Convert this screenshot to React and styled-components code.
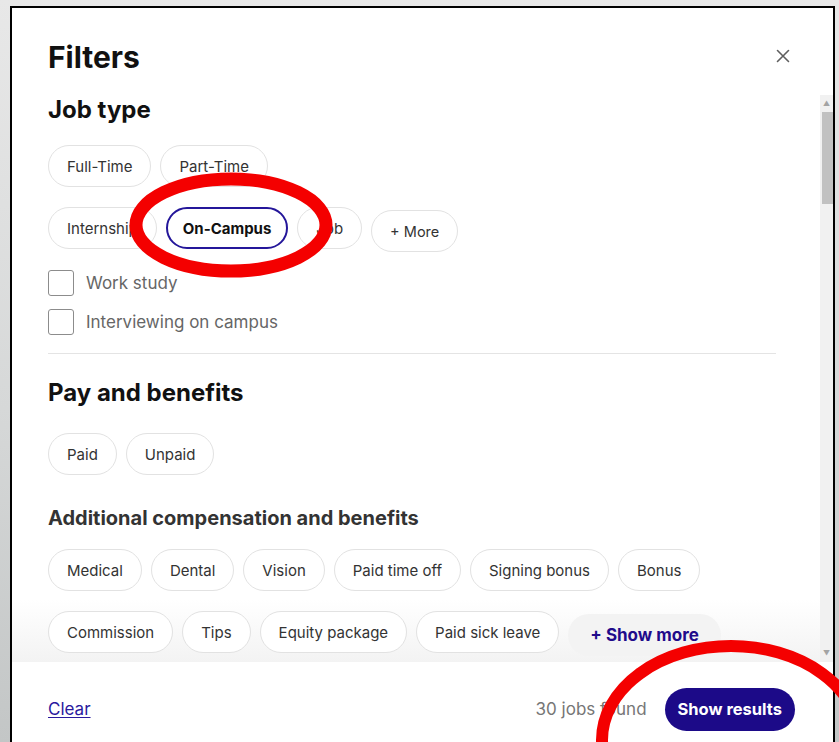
import React from "react";
import styled, { createGlobalStyle } from "styled-components";

const GlobalStyle = createGlobalStyle`
  html, body {
    margin: 0;
    padding: 0;
    height: 100%;
  }
  body {
    background: linear-gradient(180deg, #e8e8e8 0%, #d6d8d8 55%, #c3c6c6 100%);
    font-family: Inter, "Noto Sans", Arial, sans-serif;
    -webkit-font-smoothing: antialiased;
    overflow: hidden;
  }
  * { box-sizing: border-box; }
`;

const Page = styled.div`
  height: 100vh;
  padding: 6px 4px 0 10px;
  display: flex;
`;

const Modal = styled.section`
  flex: 1;
  display: flex;
  flex-direction: column;
  background: #fff;
  border: 2px solid #000;
  border-bottom: none;
  min-height: 0;
`;

const Header = styled.header`
  height: 87px;
  flex: none;
  display: flex;
  align-items: flex-start;
  justify-content: space-between;
  padding: 31px 43px 0 36px;
`;

const Title = styled.h1`
  margin: 0;
  font-size: 30px;
  line-height: 36px;
  font-weight: 700;
  color: #111;
`;

const CloseButton = styled.button`
  border: none;
  background: none;
  padding: 0;
  margin-top: 10px;
  width: 14px;
  height: 14px;
  display: flex;
  color: #5f5f5f;
  cursor: pointer;
`;

const ScrollArea = styled.div`
  flex: 1;
  display: flex;
  min-height: 0;
`;

const Content = styled.div`
  flex: 1;
  overflow: hidden;
  padding: 1px 44px 0 36px;
  background: linear-gradient(180deg, #fff 0, #fff calc(100% - 62px), #f3f3f3 100%);
`;

const Scrollbar = styled.div`
  width: 13px;
  flex: none;
  background: #f1f1f1;
  display: flex;
  flex-direction: column;
  align-items: stretch;
`;

const ScrollArrow = styled.div`
  height: 17px;
  display: flex;
  align-items: center;
  justify-content: center;
  color: #a3a3a3;
  font-size: 7px;
  line-height: 1;
`;

const ScrollThumb = styled.div`
  height: 92px;
  margin: 0 0 0 2px;
  background: #c1c1c1;
`;

const ScrollSpacer = styled.div`
  flex: 1;
`;

const SectionTitle = styled.h2`
  margin: ${(p) => p.$mt || 0}px 0 0;
  font-size: 24px;
  line-height: 28px;
  font-weight: 700;
  color: #111;
`;

const SubTitle = styled.h3`
  margin: ${(p) => p.$mt || 0}px 0 0;
  font-size: 20px;
  line-height: 24px;
  font-weight: 700;
  color: #333;
`;

const ChipGroup = styled.div`
  display: flex;
  flex-wrap: wrap;
  align-items: flex-start;
  column-gap: 9px;
  row-gap: 20px;
  margin-top: ${(p) => p.$mt || 0}px;
`;

const Chip = styled.button`
  height: 42px;
  padding: 0 ${(p) => (p.$selected ? 15 : 18)}px;
  border-radius: 21px;
  border: ${(p) => (p.$selected ? "2px solid #24169a" : "1px solid #e2e2e2")};
  background: #fff;
  font-family: inherit;
  font-size: 15px;
  font-weight: ${(p) => (p.$selected ? 700 : 400)};
  color: ${(p) => (p.$selected ? "#111" : "#333")};
  white-space: nowrap;
  cursor: pointer;
`;

const MoreChip = styled(Chip)`
  margin-top: 3px;
  font-size: 14.5px;
`;

const ShowMoreChip = styled.button`
  height: 42px;
  margin-top: 3px;
  padding: 0 22px;
  border: none;
  border-radius: 21px;
  background: #f3f3f3;
  font-family: inherit;
  font-size: 17px;
  font-weight: 700;
  color: #1f0b8b;
  white-space: nowrap;
  cursor: pointer;
`;

const CheckList = styled.div`
  display: flex;
  flex-direction: column;
  gap: 13px;
  margin-top: 18px;
`;

const CheckRow = styled.label`
  display: flex;
  align-items: center;
  gap: 12px;
  font-size: 17px;
  color: #666;
  cursor: pointer;
`;

const Box = styled.span`
  width: 26px;
  height: 26px;
  border: 1.5px solid #8c8c8c;
  border-radius: 3px;
  background: #fff;
  flex: none;
`;

const Divider = styled.hr`
  border: none;
  border-top: 1px solid #e4e4e4;
  margin: 18px 0 0;
`;

const Footer = styled.footer`
  height: 80px;
  flex: none;
  display: flex;
  align-items: center;
  padding: 14px 38px 0 36px;
  gap: 18px;
  background: #fff;
`;

const ClearLink = styled.a`
  font-size: 17px;
  color: #2a1a9e;
  text-decoration: underline;
  text-underline-offset: 2px;
  margin-right: auto;
  cursor: pointer;
`;

const Count = styled.span`
  font-size: 17px;
  color: #767676;
`;

const PrimaryButton = styled.button`
  height: 43px;
  padding: 0 13px;
  border: none;
  border-radius: 22px;
  background: #1c0a88;
  color: #fff;
  font-family: inherit;
  font-size: 16.5px;
  font-weight: 700;
  cursor: pointer;
`;

const Annotations = styled.svg`
  position: fixed;
  inset: 0;
  width: 100vw;
  height: 100vh;
  pointer-events: none;
`;

const CloseIcon = () => (
  <svg width="14" height="14" viewBox="0 0 14 14" fill="none">
    <path d="M1.5 1.5l11 11M12.5 1.5l-11 11" stroke="currentColor" strokeWidth="1.6" strokeLinecap="round" />
  </svg>
);

const employment = ["Full-Time", "Part-Time"];
const roleKinds = ["Internship", "On-Campus", "Job"];
const benefits = [
  "Medical",
  "Dental",
  "Vision",
  "Paid time off",
  "Signing bonus",
  "Bonus",
  "Commission",
  "Tips",
  "Equity package",
  "Paid sick leave",
];

export default function App() {
  return (
    <>
      <GlobalStyle />
      <Page>
        <Modal>
          <Header>
            <Title>Filters</Title>
            <CloseButton aria-label="Close">
              <CloseIcon />
            </CloseButton>
          </Header>

          <ScrollArea>
            <Content>
              <SectionTitle>Job type</SectionTitle>
              <ChipGroup $mt={21}>
                {employment.map((t) => (
                  <Chip key={t}>{t}</Chip>
                ))}
              </ChipGroup>
              <ChipGroup $mt={20}>
                {roleKinds.map((t) => (
                  <Chip key={t} $selected={t === "On-Campus"}>
                    {t}
                  </Chip>
                ))}
                <MoreChip>+ More</MoreChip>
              </ChipGroup>
              <CheckList>
                <CheckRow>
                  <Box />
                  Work study
                </CheckRow>
                <CheckRow>
                  <Box />
                  Interviewing on campus
                </CheckRow>
              </CheckList>
              <Divider />

              <SectionTitle $mt={25}>Pay and benefits</SectionTitle>
              <ChipGroup $mt={26}>
                <Chip>Paid</Chip>
                <Chip>Unpaid</Chip>
              </ChipGroup>

              <SubTitle $mt={31}>Additional compensation and benefits</SubTitle>
              <ChipGroup $mt={19}>
                {benefits.map((t) => (
                  <Chip key={t}>{t}</Chip>
                ))}
                <ShowMoreChip>+ Show more</ShowMoreChip>
              </ChipGroup>
            </Content>
            <Scrollbar>
              <ScrollArrow>▲</ScrollArrow>
              <ScrollThumb />
              <ScrollSpacer />
              <ScrollArrow>▼</ScrollArrow>
            </Scrollbar>
          </ScrollArea>

          <Footer>
            <ClearLink>Clear</ClearLink>
            <Count>30 jobs found</Count>
            <PrimaryButton>Show results</PrimaryButton>
          </Footer>
        </Modal>
      </Page>

      <Annotations viewBox="0 0 839 742" preserveAspectRatio="none">
        <ellipse cx="231" cy="225" rx="95" ry="46" fill="none" stroke="#f40000" strokeWidth="13" />
        <ellipse cx="731" cy="740" rx="129" ry="94" fill="none" stroke="#f40000" strokeWidth="12" />
      </Annotations>
    </>
  );
}
